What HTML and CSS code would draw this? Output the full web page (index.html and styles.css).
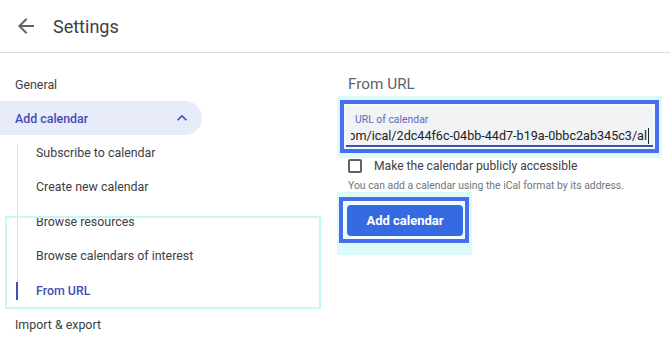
FILE: index.html
```
<!DOCTYPE html>
<html lang="en">
<head>
  <meta charset="UTF-8" />
  <meta name="viewport" content="width=device-width, initial-scale=1.0"/>
  <title>Settings</title>
  <link rel="stylesheet" href="styles.css">
</head>
<body>
  <header class="topbar">
    <svg class="back" viewBox="0 0 24 24" width="24" height="24"><path d="M20 11H7.83l5.59-5.59L12 4l-8 8 8 8 1.41-1.41L7.83 13H20v-2z"/></svg>
    <h1>Settings</h1>
  </header>

  <main class="layout">
    <nav class="sidenav">
      <div class="nav-item">General</div>
      <div class="nav-item open">
        <span>Add calendar</span>
        <svg class="chev" viewBox="0 0 24 24" width="20" height="20"><path d="M12 8l-6 6 1.41 1.41L12 10.83l4.59 4.58L18 14z"/></svg>
      </div>
      <div class="subnav">
        <div class="sub-item">Subscribe to calendar</div>
        <div class="sub-item">Create new calendar</div>
        <div class="sub-item">Browse resources</div>
        <div class="sub-item">Browse calendars of interest</div>
        <div class="sub-item active">From URL</div>
      </div>
      <div class="nav-item">Import &amp; export</div>
      <div class="ghost-box"></div>
    </nav>

    <section class="pane">
      <h2>From URL</h2>
      <div class="glow field-glow">
        <div class="mark">
          <div class="field">
            <div class="field-label">URL of calendar</div>
            <div class="field-value"><span>https://calendar.google.com/ical/2dc44f6c-04bb-44d7-b19a-0bbc2ab345c3/al</span><span class="caret"></span></div>
          </div>
        </div>
      </div>
      <label class="check-row">
        <span class="box"></span>
        <span>Make the calendar publicly accessible</span>
      </label>
      <p class="hint">You can add a calendar using the iCal format by its address.</p>
      <div class="glow btn-glow">
        <div class="mark btn-mark">
          <button class="primary">Add calendar</button>
        </div>
      </div>
    </section>
  </main>
</body>
</html>
```

FILE: styles.css
```
body {
  margin: 0;
  font-family: Roboto, 'Liberation Sans', sans-serif;
  background-color: #ffffff;
  color: #3c4043;
  overflow: hidden;
}

.topbar {
  height: 52px;
  display: flex;
  align-items: center;
  gap: 15px;
  padding-left: 14px;
  border-bottom: 1px solid #dadce0;
}

.back {
  fill: #5f6368;
}

.topbar h1 {
  margin: 0;
  font-size: 18px;
  font-weight: 400;
  color: #3c4043;
}

.layout {
  display: grid;
  grid-template-columns: 337px 1fr;
}

.sidenav {
  position: relative;
  padding-top: 14px;
}

.nav-item {
  height: 34px;
  display: flex;
  align-items: center;
  padding-left: 15px;
  font-size: 12.4px;
}

.nav-item.open {
  width: 202px;
  box-sizing: border-box;
  justify-content: space-between;
  padding-right: 10px;
  background-color: #e8ebfa;
  border-radius: 0 17px 17px 0;
  color: #3f4fb5;
  font-weight: 500;
}

.chev {
  fill: #3f4fb5;
}

.subnav {
  position: relative;
}

.subnav::before {
  content: "";
  position: absolute;
  left: 17px;
  top: 9px;
  bottom: 8px;
  width: 1px;
  background-color: #dadce0;
}

.sub-item {
  position: relative;
  height: 34.5px;
  display: flex;
  align-items: center;
  padding-left: 36px;
  font-size: 12.4px;
}

.sub-item.active {
  color: #3f4fb5;
  font-weight: 500;
}

.sub-item.active::before {
  content: "";
  position: absolute;
  left: 16px;
  top: 9px;
  bottom: 8px;
  width: 2px;
  background-color: #3f4fb5;
}

.ghost-box {
  position: absolute;
  left: 5px;
  top: 163px;
  width: 312px;
  height: 89px;
  border: 2px solid #c6f8f8;
  pointer-events: none;
}

.pane h2 {
  margin: 21px 0 0 11px;
  font-size: 15.3px;
  line-height: 20px;
  font-weight: 400;
  color: #5f6368;
}

.glow {
  background-color: #dcfcfc;
  box-sizing: border-box;
}

.mark {
  border: 4px solid #4a6cf1;
  background-color: #ecfefe;
}

.field-glow {
  width: 325px;
  margin-top: 2px;
  padding: 4px 3px 5px;
}

.field-glow .mark {
  padding: 2px;
}

.field {
  height: 41px;
  box-sizing: border-box;
  padding: 7px 4px 0 5px;
  background-color: #f1f3f4;
  border-bottom: 2px solid #3f51b5;
}

.field-label {
  margin-left: 4px;
  font-size: 10.4px;
  line-height: 13px;
  color: #5c6bc0;
}

.field-value {
  margin-top: 2px;
  display: flex;
  justify-content: flex-end;
  align-items: center;
  overflow: hidden;
  white-space: nowrap;
  font-size: 12.6px;
  line-height: 16px;
  color: #202124;
}

.caret {
  flex: none;
  width: 1px;
  height: 16px;
  margin-left: 1px;
  background-color: #202124;
}

.check-row {
  height: 16px;
  display: flex;
  align-items: center;
  gap: 12px;
  margin-left: 11px;
  font-size: 12.1px;
  color: #3c4043;
}

.box {
  width: 14px;
  height: 14px;
  box-sizing: border-box;
  border: 2px solid #5f6368;
  border-radius: 2px;
}

.hint {
  margin: 5px 0 0 11px;
  font-size: 10.4px;
  line-height: 13px;
  color: #70757a;
}

.btn-glow {
  width: 135px;
  padding: 5px 3px 12px 2px;
}

.btn-mark {
  padding: 4px 2px 3px 4px;
}

.primary {
  display: block;
  width: 116px;
  height: 31px;
  border: none;
  border-radius: 4px;
  background-color: #356ae0;
  color: #ffffff;
  font-family: Roboto, 'Liberation Sans', sans-serif;
  font-size: 13px;
  font-weight: 700;
  cursor: pointer;
}
```
